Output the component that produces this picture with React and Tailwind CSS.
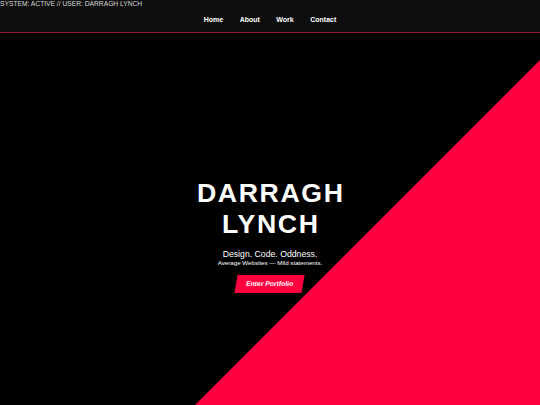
import React from 'react';

const navLinks = ['Home', 'About', 'Work', 'Contact'];

const App = () => {
  return (
    <div className="min-h-screen bg-black text-white font-['Liberation_Sans',Arial,sans-serif]">
      {/* header */}
      <header className="bg-[#0e0e0e] border-b border-[#9b1530] shadow-[0_1px_3px_rgba(255,0,64,0.35)]">
        <div className="text-[6.7px] leading-[8px] text-[#d8d8d8]">SYSTEM: ACTIVE // USER: DARRAGH LYNCH</div>
        <nav className="h-[24px] flex items-center justify-center gap-[16.5px]">
          {navLinks.map((link) => (
            <a key={link} href="#" className="text-[7px] font-bold text-white">
              {link}
            </a>
          ))}
        </nav>
      </header>

      {/* hero */}
      <section className="relative h-[405px] overflow-hidden bg-black">
        <div className="absolute inset-0 bg-[#ff003f] [clip-path:polygon(100%_27px,100%_100%,162px_100%)]"></div>
        <div className="relative h-full flex flex-col items-center justify-center text-center">
          <h1 className="text-[26.7px] leading-[31px] font-bold tracking-[0.06em] pl-[0.06em]">
            DARRAGH
            <br />
            LYNCH
          </h1>
          <p className="mt-[9px] text-[8.7px] leading-[10px]">Design. Code. Oddness.</p>
          <p className="text-[6.2px] leading-[8px]">Average Websites — Mild statements.</p>
          <a
            href="#"
            className="mt-[8px] inline-block bg-[#ff003f] px-[10px] h-[18px] leading-[18px] text-[6.8px] font-bold -skew-x-[10deg]"
          >
            Enter Portfolio
          </a>
        </div>
      </section>
    </div>
  );
};

export default App;
